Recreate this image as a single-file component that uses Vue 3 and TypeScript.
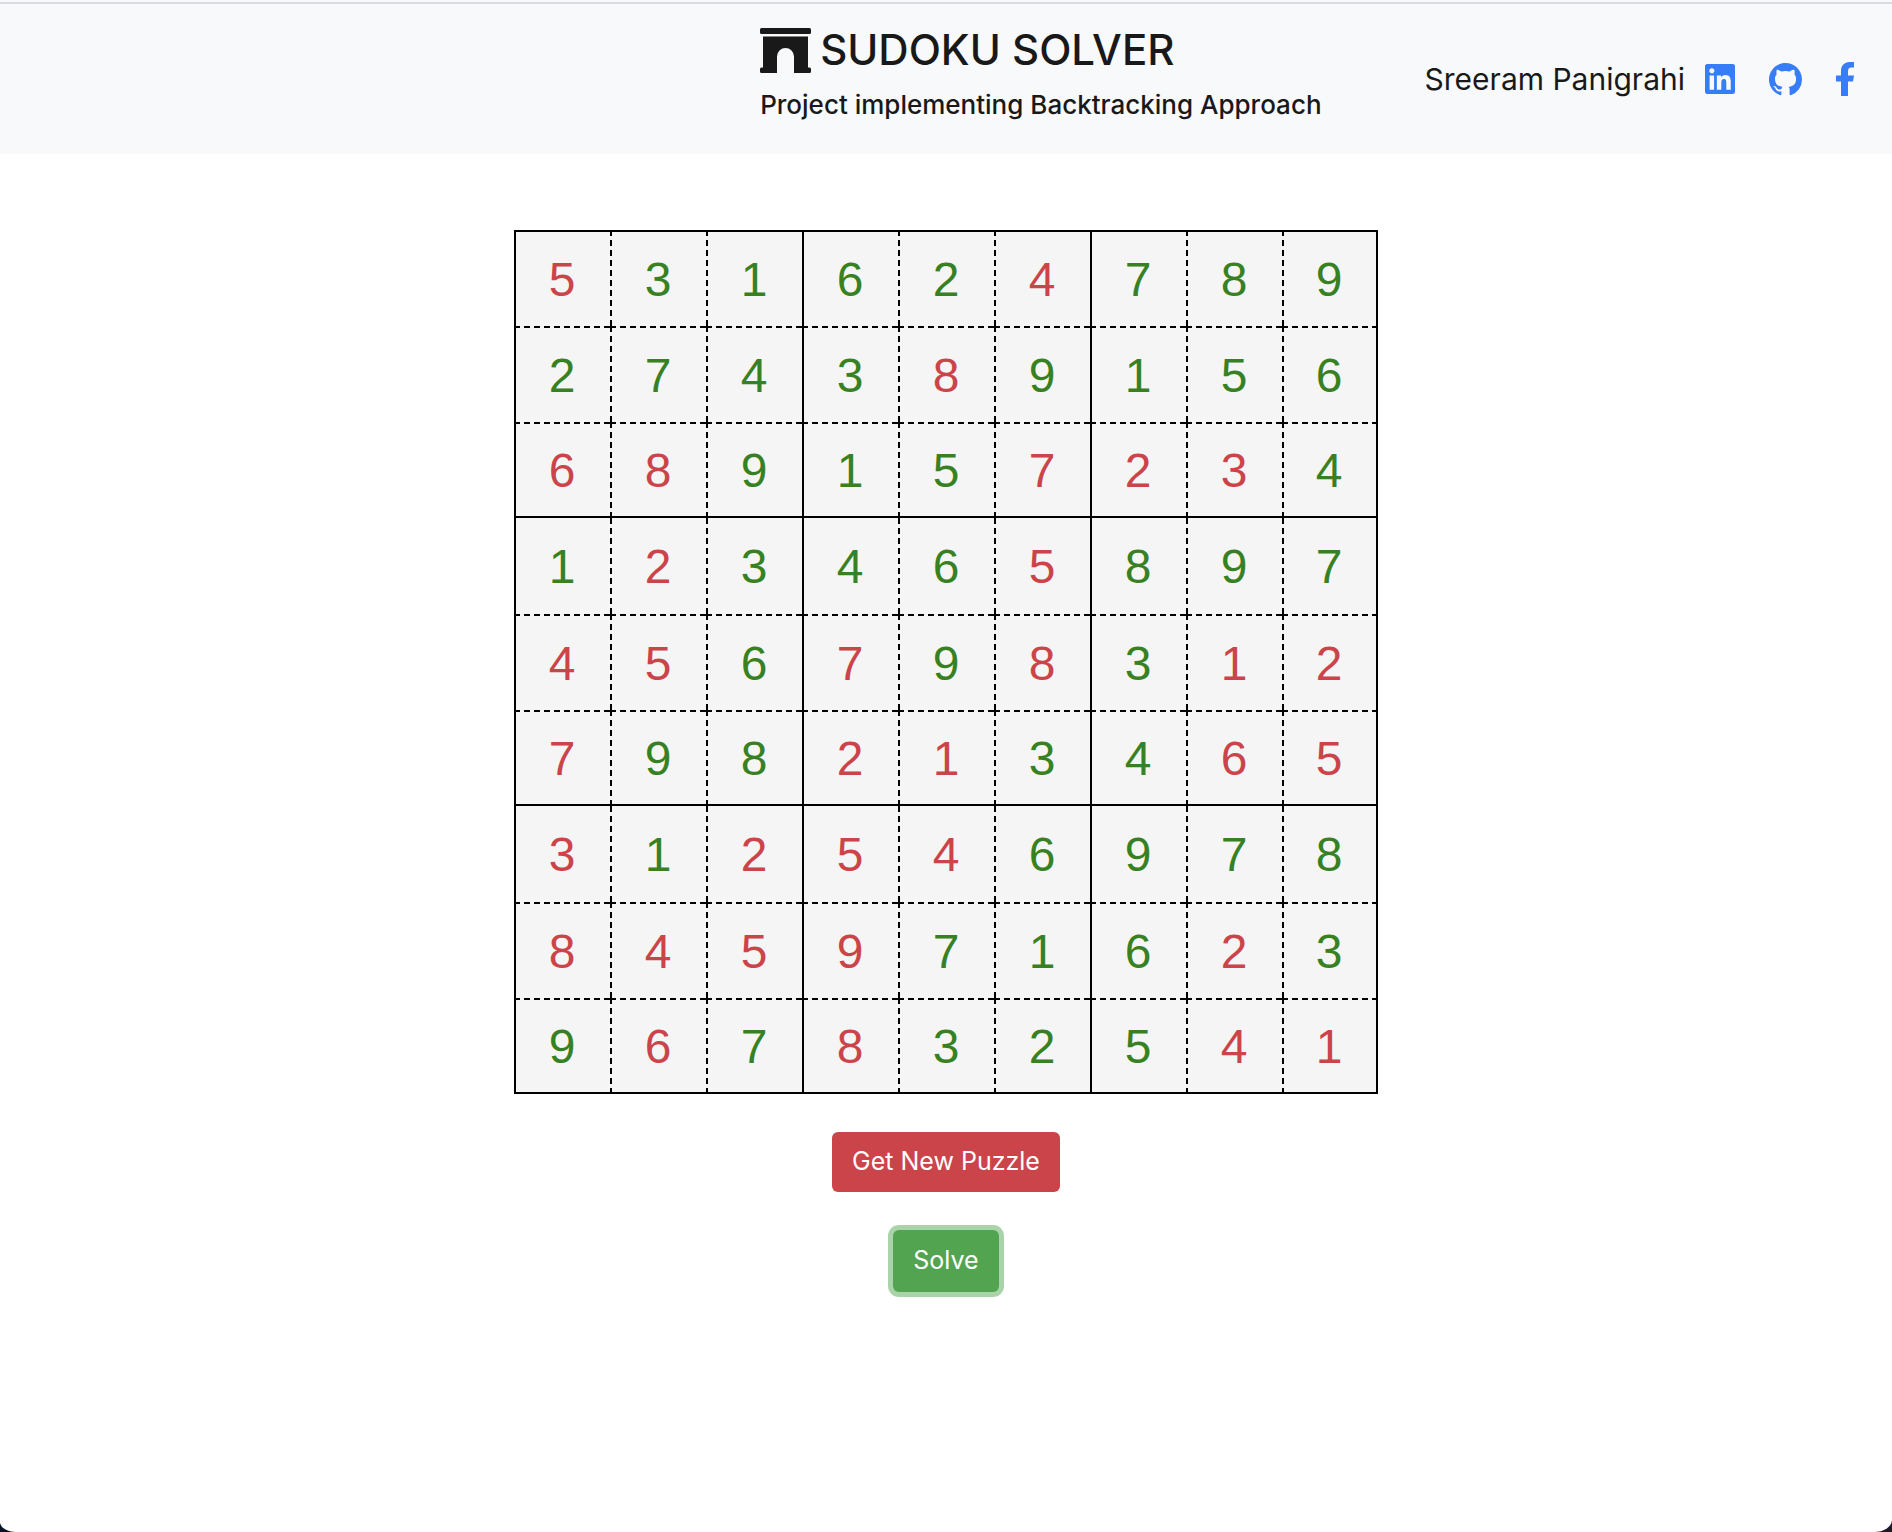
<script setup lang="ts">
import { ref, onMounted } from 'vue'

const solution: string[] = [
  '531624789',
  '274389156',
  '689157234',
  '123465897',
  '456798312',
  '798213465',
  '312546978',
  '845971623',
  '967832541',
]

// "x" marks a digit given by the puzzle, "." one filled in by the solver
const given: string[] = [
  'x....x...',
  '....x....',
  'xx...xxx.',
  '.x...x...',
  'xx.x.x.xx',
  'x..xx..xx',
  'x.xxx....',
  'xxxx...x.',
  '.x.x...xx',
]

const solveButton = ref<HTMLButtonElement | null>(null)

onMounted(() => solveButton.value?.focus())
</script>

<template>
  <div class="window">
    <header class="header">
      <div class="brand">
        <h1 class="title">
          <svg class="monument" viewBox="0 0 51 45" aria-hidden="true">
            <rect x="0" y="0" width="51" height="6" rx="1.500" />
            <path d="M3 8.500H48V39.500H49.500a1.500 1.500 0 0 1 1.500 1.500V43.500a1.500 1.500 0 0 1-1.500 1.500H34V28.500a8.500 8.500 0 0 0-17 0V45H1.500a1.500 1.500 0 0 1-1.500-1.500V41a1.500 1.500 0 0 1 1.500-1.500H3z" />
          </svg>
          <span>SUDOKU SOLVER</span>
        </h1>
        <p class="subtitle">Project implementing Backtracking Approach</p>
      </div>
      <nav class="author">
        <span class="name">Sreeram Panigrahi</span>
        <a href="#linkedin" aria-label="LinkedIn">
          <svg class="linkedin" viewBox="0 32 448 448">
            <path d="M416 32H31.900C14.300 32 0 46.500 0 64.300v383.400C0 465.500 14.300 480 31.900 480H416c17.600 0 32-14.500 32-32.300V64.300c0-17.800-14.400-32.300-32-32.300zM135.400 416H69V202.200h66.500V416zm-33.200-243c-21.300 0-38.500-17.300-38.500-38.500S80.900 96 102.200 96c21.200 0 38.500 17.300 38.500 38.500 0 21.300-17.200 38.500-38.500 38.500zm282.100 243h-66.400V312c0-24.800-.5-56.700-34.500-56.700-34.600 0-39.900 27-39.900 54.900V416h-66.400V202.200h63.700v29.200h.9c8.900-16.800 30.600-34.500 62.900-34.500 67.200 0 79.700 44.300 79.700 101.900V416z" />
          </svg>
        </a>
        <a href="#github" aria-label="GitHub">
          <svg class="github" viewBox="0 0 16 16">
            <path d="M8 0C3.580 0 0 3.580 0 8c0 3.540 2.290 6.530 5.470 7.590.4.070.55-.17.55-.38 0-.19-.01-.82-.01-1.490-2.010.37-2.530-.49-2.690-.94-.09-.23-.48-.94-.82-1.130-.28-.15-.68-.52-.01-.53.63-.01 1.080.58 1.230.82.72 1.210 1.870.87 2.330.66.07-.52.28-.87.51-1.070-1.780-.2-3.640-.89-3.640-3.950 0-.87.31-1.590.82-2.150-.08-.2-.36-1.020.08-2.120 0 0 .67-.21 2.200.82.64-.18 1.320-.27 2-.27.68 0 1.360.09 2 .27 1.530-1.040 2.200-.82 2.200-.82.44 1.100.16 1.920.08 2.120.51.56.82 1.270.82 2.150 0 3.070-1.870 3.750-3.650 3.950.29.25.54.73.54 1.480 0 1.070-.01 1.930-.01 2.200 0 .21.15.46.55.38A8.013 8.013 0 0 0 16 8c0-4.420-3.580-8-8-8z" />
          </svg>
        </a>
        <a href="#facebook" aria-label="Facebook">
          <svg class="facebook" viewBox="0 0 18 34">
            <path d="M5 34V19.500H0V13.500H5V9C5 3.500 8.500 0 13.500 0H18V5.500H15.500C13 5.500 12 7 12 9V13.500H18L17 19.500H12V34z" />
          </svg>
        </a>
      </nav>
    </header>

    <main class="main">
      <table class="board" aria-label="Sudoku board">
        <tbody>
          <tr v-for="(row, r) in solution" :key="r">
            <td v-for="(digit, c) in row" :key="c" :class="given[r][c] === 'x' ? 'given' : 'solved'">{{ digit }}</td>
          </tr>
        </tbody>
      </table>
      <button type="button" class="button new-puzzle">Get New Puzzle</button>
      <button ref="solveButton" type="button" class="button solve">Solve</button>
    </main>
  </div>
</template>

<style>
body {
  background: linear-gradient(90deg, #061426, #1b1a26);
}
</style>

<style scoped>
.window {
  box-sizing: border-box;
  min-height: 100vh;
  padding-top: 2px;
  background: linear-gradient(#f8f9fb 2px, #fff 2px);
  border-bottom-left-radius: 16px 10px;
  border-bottom-right-radius: 18px 12px;
  font-family: Inter, 'Liberation Sans', sans-serif;
  color: #191919;
}

.header {
  box-sizing: border-box;
  min-height: 152px;
  display: grid;
  grid-template-columns: 41% 1fr auto;
  padding-right: 38px;
  border-top: 2px solid #d9dbe1;
  background: #f8f9fb;
}

.brand {
  grid-column: 2;
  padding-top: 18px;
}

.title {
  display: flex;
  align-items: center;
  gap: 9px;
  margin: 0;
  font-size: 42px;
  line-height: 56px;
  font-weight: 500;
  white-space: nowrap;
}

.monument {
  width: 51px;
  height: 45px;
  fill: currentColor;
}

.subtitle {
  margin: 10px 0 0;
  font-size: 26px;
  line-height: 34px;
  font-weight: 500;
  white-space: nowrap;
}

.author {
  display: flex;
  align-items: center;
  align-self: start;
  height: 40px;
  margin-top: 55px;
}

.name {
  font-size: 30px;
  line-height: 40px;
  margin-right: 20px;
  white-space: nowrap;
}

.author a {
  display: flex;
  color: #377df7;
}

.author a + a {
  margin-left: 34px;
}

.author svg {
  fill: currentColor;
}

.linkedin {
  width: 30px;
  height: 30px;
}

.github {
  width: 33px;
  height: 33px;
}

.facebook {
  width: 18px;
  height: 34px;
}

.main {
  display: flex;
  flex-direction: column;
  align-items: center;
  padding: 76px 0 40px;
}

.board {
  border-collapse: separate;
  border-spacing: 0;
  table-layout: fixed;
  width: 864px;
  font-family: 'Liberation Sans', Arial, sans-serif;
  font-size: 48px;
  line-height: 56px;
}

.board td {
  box-sizing: border-box;
  width: 96px;
  height: 96px;
  padding: 2px 2px 0 0;
  border: 0 dashed #000;
  border-top-width: 2px;
  border-left-width: 2px;
  background: #f5f5f5;
  text-align: center;
  vertical-align: middle;
}

.board td:nth-child(3n + 1) {
  border-left-style: solid;
}

.board td:last-child {
  border-right: 2px solid #000;
}

.board tr:first-child td {
  border-top-style: solid;
}

.board tr:nth-child(3n) td {
  border-bottom: 2px solid #000;
}

.board tr:nth-child(3n + 4) td {
  border-top-width: 0;
}

.given {
  color: #cb444a;
}

.solved {
  color: #378123;
}

.button {
  margin: 38px 0 0;
  padding: 0 20px 2px;
  border: 0;
  border-radius: 6px;
  color: #fff;
  font-family: inherit;
  font-size: 25px;
  cursor: pointer;
}

.new-puzzle {
  height: 60px;
  background: #cb444a;
}

.solve {
  height: 62px;
  background: #53a451;
}

.solve:focus {
  outline: none;
  box-shadow: 0 0 0 5px #a9d3a8;
}
</style>
